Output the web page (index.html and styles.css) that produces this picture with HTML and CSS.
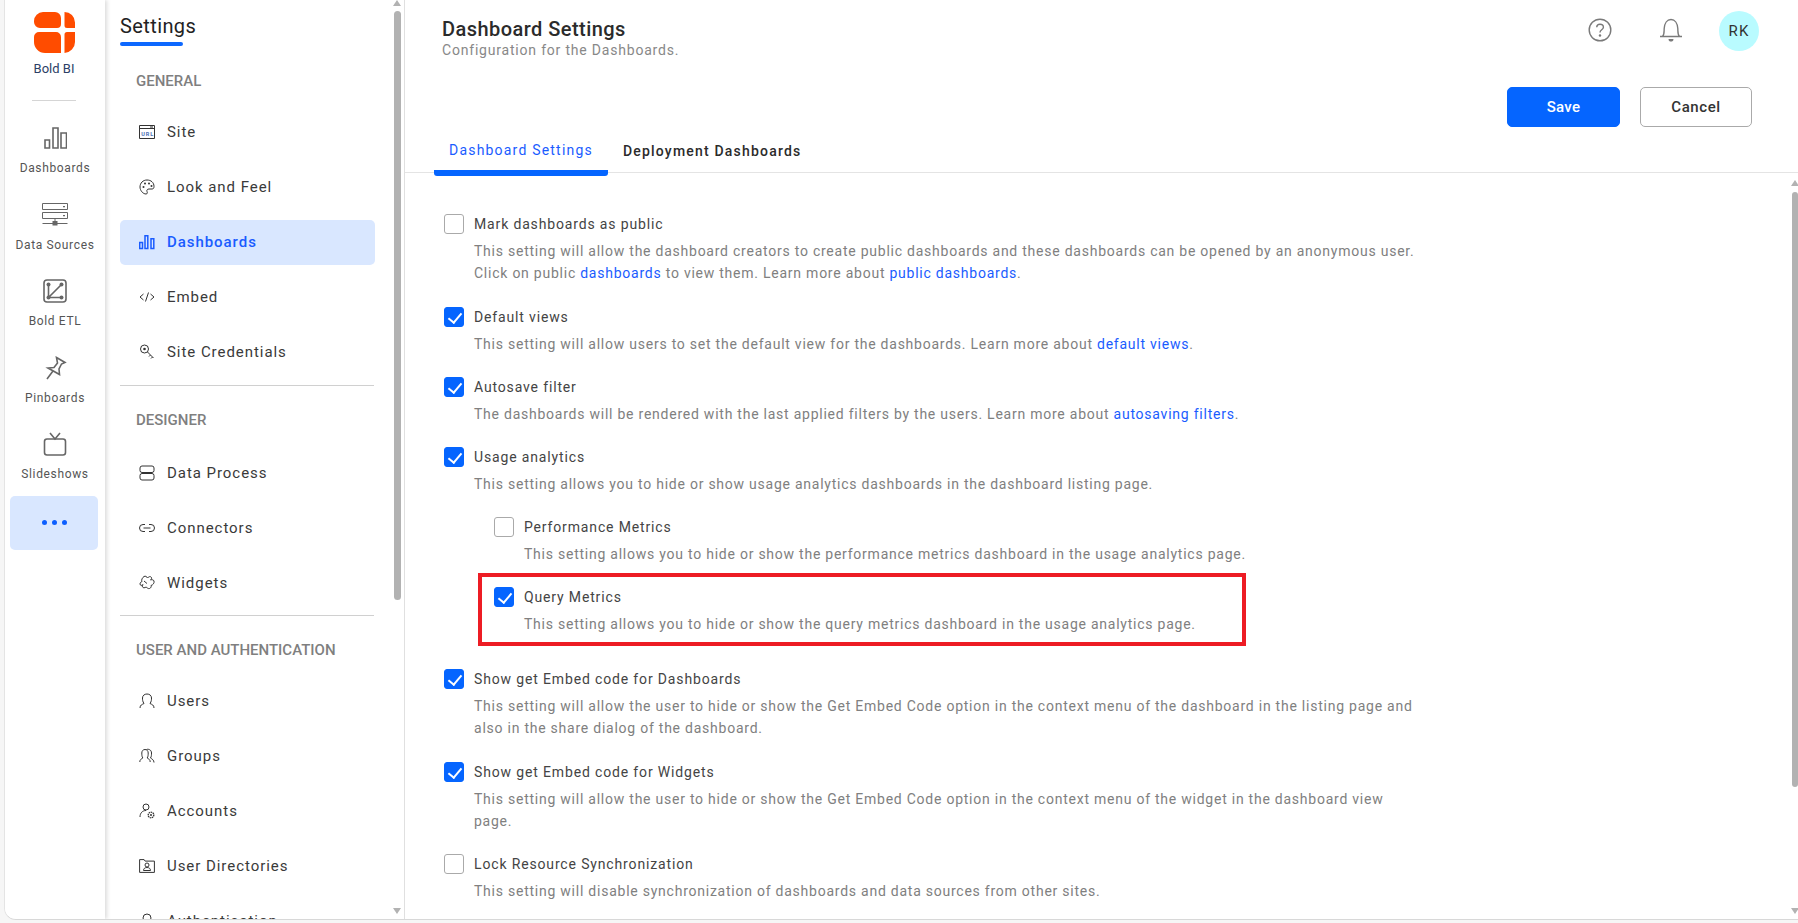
FILE: index.html
```html
<!DOCTYPE html>
<html lang="en">
<head>
  <meta charset="UTF-8" />
  <title>Dashboard Settings</title>
  <link rel="stylesheet" href="styles.css">
</head>
<body>
<div class="app">
  <!-- product rail -->
  <nav class="rail">
    <div class="brand">
      <svg class="logo" viewBox="0 0 41 41"><path fill="#ff4c00" d="M9 0h12a6 6 0 0 1 6 6v6a4 4 0 0 1-4 4H6a6 6 0 0 1-6-6V9a9 9 0 0 1 9-9zM30.500 0a10.500 10.500 0 0 1 10.500 10.500V16H33a2.500 2.500 0 0 1-2.500-2.500zM5 20h17a5 5 0 0 1 5 5v16H11A11 11 0 0 1 0 30v-5a5 5 0 0 1 5-5zM33 20h8v10a11 11 0 0 1-10.500 11V22.500A2.500 2.500 0 0 1 33 20z"/></svg>
      <span class="brand-name">Bold BI</span>
    </div>
    <a class="rail-item">
      <svg class="rail-icon" viewBox="0 0 24 24"><path d="M2 14h4.500v8H2zM10 2h5v20h-5zM18 7h5.500v15H18z"/></svg>
      <span>Dashboards</span>
    </a>
    <a class="rail-item">
      <svg class="rail-icon wide thin" viewBox="0 0 26 24"><path d="M.5.5h25v6H.5zM.5 9.500h25v6H.5zM13 15.500v5M.5 20.500h25"/><path class="solid" d="M10.500 18h5v4.500h-5zM21 3h2v1.200h-2zM21 12h2v1.200h-2z"/></svg>
      <span>Data Sources</span>
    </a>
    <a class="rail-item">
      <svg class="rail-icon" viewBox="0 0 24 24"><rect x="1" y="1" width="22" height="22" rx="3"/><path d="M5.500 5.500V18.500h13.500M5.500 18.500L18.500 5.500"/><circle class="solid" cx="5.500" cy="5.500" r="2"/><circle class="solid" cx="5.500" cy="18.500" r="2"/><circle class="solid" cx="18.500" cy="5.500" r="2"/><circle class="solid" cx="18.500" cy="18.500" r="2"/></svg>
      <span>Bold ETL</span>
    </a>
    <a class="rail-item">
      <svg class="rail-icon" viewBox="0 0 24 24"><path d="M13.500 1.500l8.500 5-3.500 1.500-2.500 5 .5 5.500L5 12l6-.5 3.500-4.500zM10 15l-6 8"/></svg>
      <span>Pinboards</span>
    </a>
    <a class="rail-item">
      <svg class="rail-icon" viewBox="0 0 24 24"><rect x="1.500" y="7" width="21" height="16" rx="2.500"/><path d="M7 1l5 6 5-6"/></svg>
      <span>Slideshows</span>
    </a>
    <a class="rail-more"><i></i><i></i><i></i></a>
  </nav>

  <!-- settings list -->
  <aside class="side">
    <div class="side-scroll">
      <h2 class="side-title">Settings</h2>
      <h3 class="group first">GENERAL</h3>
      <a class="nav-item"><svg viewBox="0 0 16 14"><path d="M.5.500h15v13H.5zM.5 3.500h15M11 2h3"/><text x="2.200" y="11" class="url">URL</text></svg>Site</a>
      <a class="nav-item"><svg viewBox="0 0 16 16"><path d="M8 1C4 1 1 4 1 8c0 3.500 3 7 6 7 1.500 0 1.500-1.500 1-2.500s0-2.500 2-2.500h3c1.500 0 2-1 2-2.500C15 3.500 12 1 8 1z"/><circle class="solid" cx="4.500" cy="8" r="1"/><circle class="solid" cx="6" cy="4.500" r="1"/><circle class="solid" cx="10" cy="4.500" r="1"/><circle class="solid" cx="12.500" cy="7" r="1"/></svg>Look and Feel</a>
      <a class="nav-item active"><svg class="bars" viewBox="0 0 16 14"><path d="M.7 7.500h2.800v6H.7zM6 .7h2.800v12.800H6zM12 3.700h2.800v9.800H12z"/></svg>Dashboards</a>
      <a class="nav-item"><svg viewBox="0 0 16 14"><path d="M4.500 4L1 7l3.500 3M11.500 4L15 7l-3.500 3M9.500 2.500l-3 9"/></svg>Embed</a>
      <a class="nav-item"><svg viewBox="0 0 16 16"><circle cx="5.500" cy="5" r="4"/><circle class="solid" cx="5.500" cy="5" r="1.300"/><path d="M8.500 8l6 6M11.500 11l-1.500 1.500M13.500 13l-1.500 1.500"/></svg>Site Credentials</a>
      <hr class="rule">
      <h3 class="group">DESIGNER</h3>
      <a class="nav-item"><svg viewBox="0 0 16 16"><rect x="1" y="1" width="14" height="6.500" rx="2"/><rect x="1" y="8.500" width="14" height="6.500" rx="2"/></svg>Data Process</a>
      <a class="nav-item"><svg viewBox="0 0 16 9"><path d="M6 1H4a3.500 3.500 0 0 0 0 7h2M10 1h2a3.500 3.500 0 0 1 0 7h-2M4.500 4.500h7"/></svg>Connectors</a>
      <a class="nav-item"><svg viewBox="0 0 16 16"><path d="M5 1.500c1.500-1 3 .5 3.500 1.500 1-1.500 3-2 4-.5.500 1-.5 2-1 2.500 1-.5 3-.5 3.500 1 .5 2-1 4-3 4.500.5 1 0 2.500-1.500 3-1.500.5-2.500-1-3.500-1.500-1 1-3 1-3.500 0-.5-1 .5-2 .5-2.500C3 11 1 10.500 1 9s1-2 2-2.500C2 5 3.500 2.500 5 1.500zM5 6l3 2.500"/></svg>Widgets</a>
      <hr class="rule">
      <h3 class="group second">USER AND AUTHENTICATION</h3>
      <a class="nav-item"><svg viewBox="0 0 16 16"><path d="M1 15c0-3 2-3.500 4-4.500C3.500 8.500 3.500 6.500 3.500 5 3.500 2.500 5.500 1 8 1s4.500 1.500 4.500 4c0 1.500 0 3.500-1.500 5.500 2 1 4 1.500 4 4.500"/></svg>Users</a>
      <a class="nav-item"><svg viewBox="0 0 16 16"><path d="M.8 14c0-2.500 1.500-3 3-4C2.800 8.500 2.800 6.500 2.800 5 2.800 3 4 1.500 6 1.500S9.200 3 9.200 5c0 1.500 0 3.500-1 5 1.500 1 3 1.500 3 4"/><path d="M7.500 1.500C9 .8 12.500 1.500 12.500 5c0 1.500 0 3.500-1 5 1.500 1 3.500 2 3.500 4.500"/></svg>Groups</a>
      <a class="nav-item"><svg viewBox="0 0 16 16"><circle cx="7" cy="4" r="3"/><path d="M1 14c0-4 2.500-6.500 6-6.500"/><circle class="gear" cx="12" cy="12" r="2.800"/><circle class="solid" cx="12" cy="12" r="1"/></svg>Accounts</a>
      <a class="nav-item"><svg viewBox="0 0 16 14"><path d="M.6 13.400V.6h4.500l1 1.500h9.300v11.300z"/><circle cx="8" cy="6" r="2"/><path d="M4.500 11.500c0-2 1.500-3 3.500-3s3.500 1 3.500 3z"/></svg>User Directories</a>
      <a class="nav-item"><svg viewBox="0 0 16 16"><circle cx="8" cy="5" r="4"/><path d="M4 8v7h8V8"/></svg>Authentication</a>
    </div>
    <div class="thin-bar side-bar"><b class="up"></b><i></i><b class="down"></b></div>
  </aside>

  <!-- main pane -->
  <main class="main">
    <header class="top">
      <div class="heading">
        <h1>Dashboard Settings</h1>
        <p>Configuration for the Dashboards.</p>
      </div>
      <div class="top-icons">
        <svg class="top-icon" viewBox="0 0 24 24"><circle cx="12" cy="12" r="10.800"/><path d="M8.700 9.300C8.800 7.300 10.200 6.300 12 6.300c2 0 3.400 1.200 3.400 2.900 0 2.600-3.400 2.600-3.400 5.300"/><circle class="solid" cx="12" cy="17.500" r="1.200"/></svg>
        <svg class="top-icon bell" viewBox="0 0 24 24"><path d="M1 18.500h22M3.500 18.500c2-2 1.500-5 1.700-8C5.500 5.500 8 1.500 12 1.500s6.500 4 6.800 9c.2 3-.3 6 1.700 8"/><path class="solid" d="M9.500 21h5c0 2-1.200 2.500-2.500 2.500S9.500 23 9.500 21z"/></svg>
        <span class="avatar">RK</span>
      </div>
    </header>
    <div class="actions">
      <button class="btn primary">Save</button>
      <button class="btn">Cancel</button>
    </div>
    <div class="tabs">
      <a class="tab active">Dashboard Settings</a>
      <a class="tab">Deployment Dashboards</a>
    </div>
    <div class="content">
      <div class="settings">
        <div class="setting roomy">
          <label class="check"><span class="box"></span>Mark dashboards as public</label>
          <p>This setting will allow the dashboard creators to create public dashboards and these dashboards can be opened by an anonymous user.<br>Click on public <a>dashboards</a> to view them. Learn more about <a>public dashboards</a>.</p>
        </div>
        <div class="setting">
          <label class="check"><span class="box on"></span>Default views</label>
          <p>This setting will allow users to set the default view for the dashboards. Learn more about <a>default views</a>.</p>
        </div>
        <div class="setting">
          <label class="check"><span class="box on"></span>Autosave filter</label>
          <p>The dashboards will be rendered with the last applied filters by the users. Learn more about <a>autosaving filters</a>.</p>
        </div>
        <div class="setting">
          <label class="check"><span class="box on"></span>Usage analytics</label>
          <p>This setting allows you to hide or show usage analytics dashboards in the dashboard listing page.</p>
        </div>
        <div class="setting sub">
          <label class="check"><span class="box"></span>Performance Metrics</label>
          <p>This setting allows you to hide or show the performance metrics dashboard in the usage analytics page.</p>
        </div>
        <div class="setting marked">
          <label class="check"><span class="box on"></span>Query Metrics</label>
          <p>This setting allows you to hide or show the query metrics dashboard in the usage analytics page.</p>
        </div>
        <div class="setting roomy">
          <label class="check"><span class="box on"></span>Show get Embed code for Dashboards</label>
          <p>This setting will allow the user to hide or show the Get Embed Code option in the context menu of the dashboard in the listing page and<br>also in the share dialog of the dashboard.</p>
        </div>
        <div class="setting">
          <label class="check"><span class="box on"></span>Show get Embed code for Widgets</label>
          <p>This setting will allow the user to hide or show the Get Embed Code option in the context menu of the widget in the dashboard view<br>page.</p>
        </div>
        <div class="setting">
          <label class="check"><span class="box"></span>Lock Resource Synchronization</label>
          <p>This setting will disable synchronization of dashboards and data sources from other sites.</p>
        </div>
      </div>
      <div class="thin-bar main-bar"><b class="up"></b><i></i><b class="down"></b></div>
    </div>
  </main>
</div>
</body>
</html>
```

FILE: styles.css
```css
* { box-sizing: border-box; }
html, body { margin: 0; height: 100%; overflow: hidden; }
body {
  background: #f6f6f6; color: #333; font-family: Roboto, "Liberation Sans", sans-serif;
  padding: 0 0 3px 4px;
}
h1, h2, h3, p { margin: 0; font-weight: 400; }
a { color: inherit; }
svg { fill: none; stroke: currentColor; stroke-width: 1.2; flex: none; }
svg .solid { fill: currentColor; stroke: none; }

.app {
  display: flex; height: 100%; background: #fff;
  border-radius: 0 0 0 12px; border-left: 1px solid #e4e4e4; border-bottom: 1px solid #d8d8d8;
  overflow: hidden;
}

/* rail */
.rail {
  width: 100px; flex: none; display: flex; flex-direction: column; align-items: center;
  box-shadow: 2px 0 4px rgba(0,0,0,.14); z-index: 2; background: #fff;
}
.brand {
  width: 44px; height: 101px; padding-top: 12px; border-bottom: 1px solid #d5d5d5;
  display: flex; flex-direction: column; align-items: center; margin-bottom: 13px; margin-left: -2px;
}
.logo { width: 41px; height: 41px; stroke: none; }
.brand-name { font-size: 13px; color: #2c3e66; margin-top: 8px; white-space: nowrap; }
.rail-item {
  height: 76.500px; width: 100%; display: flex; flex-direction: column; align-items: center;
  font-size: 12px; letter-spacing: .65px; color: #555; white-space: nowrap;
}
.rail-icon { width: 24px; height: 24px; color: #666; stroke-width: 1.600; margin-top: 12px; margin-bottom: 11px; }
.rail-icon.wide { width: 26px; }
.rail-icon.thin { stroke-width: 1; }
.rail-more {
  width: 88px; height: 54px; margin-top: -1px; background: #d9e7ff; border-radius: 5px;
  display: flex; align-items: center; justify-content: center; gap: 5px; margin-left: -2px;
}
.rail-more i { width: 5px; height: 5px; border-radius: 50%; background: #0d5fff; }

/* settings list */
.side {
  width: 300px; flex: none; display: flex; position: relative; overflow: hidden;
  border-right: 1px solid #e0e0e0;
}
.side-scroll { width: 283px; padding-left: 15px; flex: none; }
.side-title {
  font-size: 20px; font-weight: 400; color: #222; line-height: 24px; padding-top: 14px; letter-spacing: .4px;
  position: relative; height: 46px;
}
.side-title::after {
  content: ""; display: block; width: 63px; height: 4px; background: #0d68ff; border-radius: 2px; margin-top: 4px;
}
.group {
  font-size: 15px; font-weight: 500; color: #7f7f7f; line-height: 18px; padding-left: 16px;
  margin-top: 25px; margin-bottom: 21.500px;
}
.group.first { margin-top: 26px; margin-bottom: 19.500px; }
.group.second { margin-bottom: 19.500px; }
.nav-item {
  width: 255px; height: 45px; margin-bottom: 10px; padding-left: 19px; display: flex; align-items: center; gap: 12px;
  font-size: 15px; letter-spacing: .95px; color: #3a3a3a; border-radius: 5px; white-space: nowrap;
}
.nav-item svg { width: 16px; height: 16px; stroke-width: 1; color: #333; }
.nav-item .url { font-size: 5.500px; fill: #4a6fb5; stroke: none; font-family: Roboto, sans-serif; font-weight: 700; }
.nav-item .gear { stroke-dasharray: 1.500 .6; stroke-width: 1.300; }
.nav-item.active { background: #d9e7ff; color: #1a5cff; font-weight: 500; }
.nav-item.active svg { color: #1a5cff; stroke-width: 1.500; }
.rule { border: 0; border-top: 1px solid #d0d0d0; margin: 0; width: 254px; }

.thin-bar { display: flex; flex-direction: column; align-items: center; position: relative; }
.thin-bar i { display: block; background: #b2b2b2; border-radius: 4px; }
.thin-bar b { width: 0; height: 0; border-left: 4px solid transparent; border-right: 4px solid transparent; }
.thin-bar .up { border-bottom: 6px solid #b2b2b2; }
.thin-bar .down { border-top: 6px solid #b2b2b2; margin-top: auto; }
.side-bar { width: 8px; margin-left: 5px; padding-bottom: 5px; }
.side-bar i { width: 7px; height: 589px; margin-top: 5px; }

/* main */
.main { flex: 1; min-width: 0; display: flex; flex-direction: column; }
.top { display: flex; justify-content: space-between; padding: 18px 39px 0 37px; height: 87px; }
.heading h1 { font-size: 20px; font-weight: 500; letter-spacing: .45px; color: #2b2b2b; line-height: 22px; }
.heading p { font-size: 14px; letter-spacing: .8px; color: #888; line-height: 18px; margin-top: 1px; }
.top-icons { display: flex; align-items: flex-start; margin-top: -7px; }
.top-icon { width: 24px; height: 24px; color: #7a7a7a; stroke-width: 1.400; margin-top: 7px; }
.bell { margin-left: 47px; }
.avatar {
  width: 40px; height: 40px; border-radius: 50%; background: #b9fbff; margin-left: 36px;
  display: flex; align-items: center; justify-content: center; font-size: 15px; letter-spacing: 1.200px; color: #333;
}
.actions { display: flex; justify-content: flex-end; gap: 20px; padding-right: 46px; height: 40px; }
.btn {
  width: 112px; height: 40px; border: 1px solid #aaa; border-radius: 5px; background: #fff;
  font: 500 15px Roboto, sans-serif; letter-spacing: .6px; color: #333; padding: 0;
}
.btn.primary { width: 113px; background: #0565ff; border-color: #0565ff; color: #fff; letter-spacing: .3px; }
.tabs {
  display: flex; height: 46px; border-bottom: 1px solid #e4e4e4; padding-left: 29px;
}
.tab {
  height: 49px; padding: 14px 15px 0; font-size: 14px; font-weight: 500; letter-spacing: 1.200px; color: #2b2b2b;
  border-bottom: 6px solid transparent; border-radius: 0 0 3px 3px; line-height: 20px;
}
.tab.active { color: #1a5cff; border-bottom-color: #0565ff; border-radius: 3px; padding-top: 13px; font-weight: 400; }

.content { flex: 1; min-height: 0; display: flex; justify-content: space-between; padding-top: 7px; }
.settings { padding: 33px 0 0 39px; }
.setting { margin-bottom: 21px; }
.setting.roomy { margin-bottom: 22px; }
.check { display: flex; align-items: center; gap: 10px; height: 22px; font-size: 14px; letter-spacing: .85px; color: #444; }
.box { width: 20px; height: 20px; border: 1px solid #aaa; border-radius: 3px; background: #fff; flex: none; position: relative; }
.box.on { background: #0565ff; border-color: #0565ff; }
.box.on::after {
  content: ""; position: absolute; left: 6px; top: 2px; width: 6px; height: 11px;
  border: solid #fff; border-width: 0 2.500px 2.500px 0; transform: rotate(40deg);
}
.setting p { padding-left: 30px; margin-top: 5px; font-size: 14px; line-height: 22px; letter-spacing: .76px; color: #808080; white-space: nowrap; }
.setting p a { color: #1a5cff; }
.setting.sub { margin-left: 50px; }
.setting.marked {
  width: 768px; height: 72.500px; margin: -13px 0 22.500px 34px; padding: 8.500px 0 0 12px;
  border: 4px solid #ed1c24;
}
.main-bar { width: 6px; padding-bottom: 5px; }
.main-bar i { width: 6px; height: 595px; margin-top: 6px; }
```
